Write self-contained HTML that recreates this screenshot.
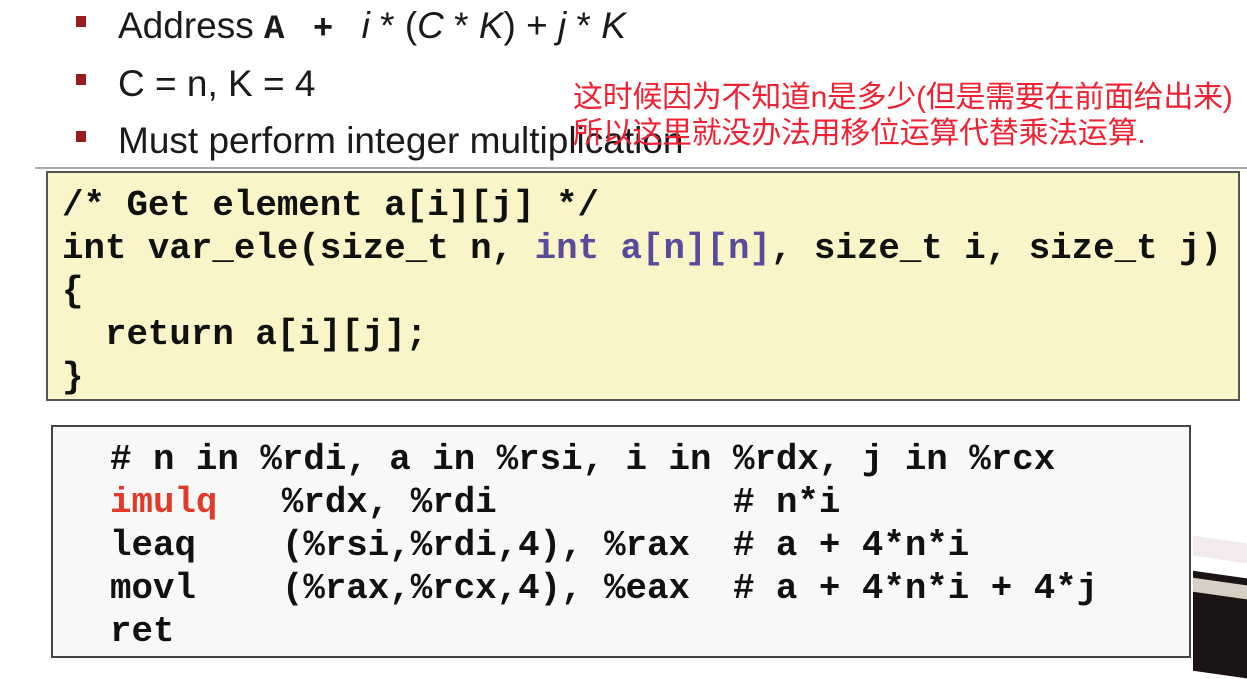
<!DOCTYPE html>
<html><head><meta charset="utf-8"><style>
body{margin:0;width:1247px;height:661px;background:#fff;position:relative;overflow:hidden;font-family:"Liberation Sans",sans-serif}
.b{position:absolute;left:118px;font-size:37px;line-height:42px;color:#1a1a1a;white-space:nowrap;letter-spacing:0}
.sq{position:absolute;left:76px;width:10px;height:11px;background:#9b1c1c}
.red{position:absolute;left:573px;font-family:"Liberation Sans","Noto Sans CJK SC",sans-serif;font-size:30px;color:#ee2233;white-space:nowrap;line-height:36px;letter-spacing:-0.3px}
.box1{position:absolute;left:46px;top:171px;width:1194px;height:230px;background:#faf5c9;border:2px solid #555;box-sizing:border-box}
.box2{position:absolute;left:51px;top:425px;width:1140px;height:233px;background:#f8f8f8;border:2px solid #444;box-sizing:border-box}
pre{margin:0;position:absolute;font-family:"Liberation Mono",monospace;font-weight:bold;font-size:35.8px;line-height:43px;color:#111}
.p{color:#5a4a9a}.r{color:#e03a2a}
i{font-family:"Liberation Sans",sans-serif}
</style></head><body>
<div class="sq" style="top:16px"></div>
<div class="b" style="top:5px">Address <b style="font-family:'Liberation Mono',monospace;font-size:34px;word-spacing:8px">A + </b> <i>i</i> * (<i>C</i> * <i>K</i>) + <i>j</i> * <i>K</i></div>
<div class="sq" style="top:74px"></div>
<div class="b" style="top:63px">C = n, K = 4</div>
<div class="sq" style="top:131px"></div>
<div class="b" style="top:120px">Must perform integer multiplication</div>
<div style="position:absolute;left:35px;top:167px;width:1212px;height:2px;background:#aaa"></div>
<div class="red" style="top:80px">这时候因为不知道n是多少(但是需要在前面给出来)<br>所以这里就没办法用移位运算代替乘法运算.</div>
<div class="box1"><pre style="left:14px;top:11px">/* Get element a[i][j] */
int var_ele(size_t n, <span class="p">int a[n][n]</span>, size_t i, size_t j)
{
  return a[i][j];
}</pre></div>
<div class="box2"><pre style="left:57px;top:11px"># n in %rdi, a in %rsi, i in %rdx, j in %rcx
<span class="r">imulq</span>   %rdx, %rdi           # n*i
leaq    (%rsi,%rdi,4), %rax  # a + 4*n*i
movl    (%rax,%rcx,4), %eax  # a + 4*n*i + 4*j
ret</pre></div>
<div style="position:absolute;left:1193px;top:540px;width:60px;height:20px;background:#f3eaee;transform:skewY(8deg)"></div>
<div style="position:absolute;left:1193px;top:575px;width:60px;height:100px;background:#1a1414;transform:skewY(8deg)"></div>
<div style="position:absolute;left:1193px;top:582px;width:60px;height:14px;background:#d8d0c4;transform:skewY(8deg)"></div>
</body></html>
